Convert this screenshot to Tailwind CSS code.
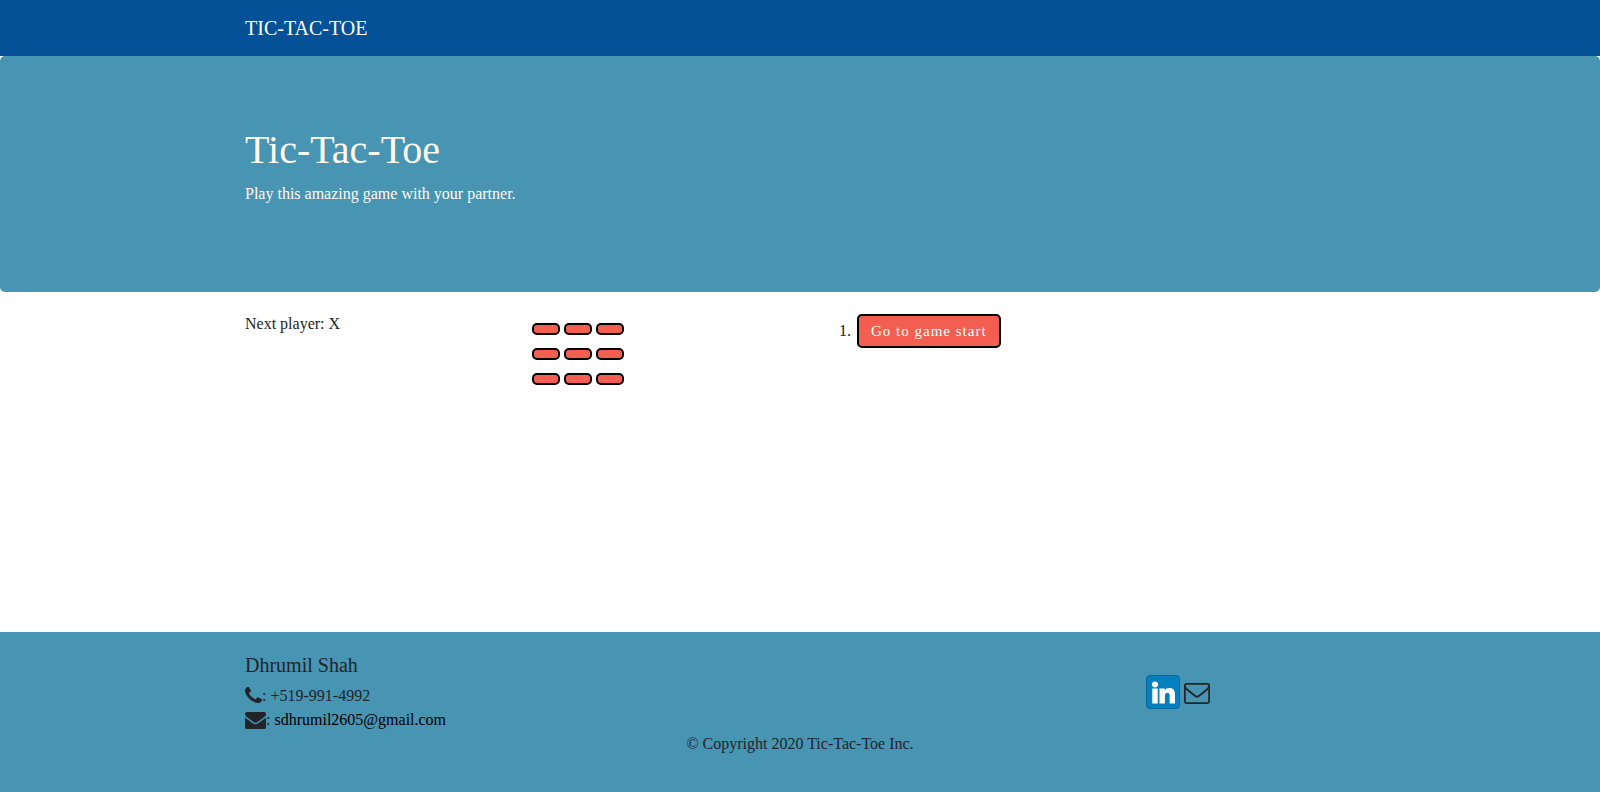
<!DOCTYPE html>
<html lang="en">
<head>
<meta charset="utf-8">
<meta name="viewport" content="width=device-width, initial-scale=1">
<title>Tic-Tac-Toe</title>
<script src="https://cdn.jsdelivr.net/npm/@tailwindcss/browser@4"></script>
</head>
<body class="flex min-h-screen flex-col bg-white font-['Liberation_Serif','Times_New_Roman',serif] text-base text-[#212529]">
<nav class="bg-[#055197] py-[13px]">
  <div class="mx-auto max-w-[1140px] px-[15px]">
    <a href="#" class="block text-xl leading-[30px] text-white">TIC-TAC-TOE</a>
  </div>
</nav>
<header class="mb-5 rounded-[5px] bg-[#4794b3] pt-[70px] pb-[86px] text-[#fffaf0]">
  <div class="mx-auto max-w-[1140px] px-[15px]">
    <h1 class="mb-2 text-[40px] leading-[48px]">Tic-Tac-Toe</h1>
    <p class="leading-6">Play this amazing game with your partner.</p>
  </div>
</header>
<main class="mx-auto grid w-full max-w-[1140px] grow grid-cols-4">
  <div class="px-[15px]">Next player: X</div>
  <div class="px-[17px] pt-[11px]">
    <div class="grid w-fit grid-cols-3 gap-x-1 gap-y-[13px]">
      <button type="button" aria-label="Square 1" class="h-3 w-7 rounded-[5px] border-2 border-black bg-[#f25f50]"></button>
      <button type="button" aria-label="Square 2" class="h-3 w-7 rounded-[5px] border-2 border-black bg-[#f25f50]"></button>
      <button type="button" aria-label="Square 3" class="h-3 w-7 rounded-[5px] border-2 border-black bg-[#f25f50]"></button>
      <button type="button" aria-label="Square 4" class="h-3 w-7 rounded-[5px] border-2 border-black bg-[#f25f50]"></button>
      <button type="button" aria-label="Square 5" class="h-3 w-7 rounded-[5px] border-2 border-black bg-[#f25f50]"></button>
      <button type="button" aria-label="Square 6" class="h-3 w-7 rounded-[5px] border-2 border-black bg-[#f25f50]"></button>
      <button type="button" aria-label="Square 7" class="h-3 w-7 rounded-[5px] border-2 border-black bg-[#f25f50]"></button>
      <button type="button" aria-label="Square 8" class="h-3 w-7 rounded-[5px] border-2 border-black bg-[#f25f50]"></button>
      <button type="button" aria-label="Square 9" class="h-3 w-7 rounded-[5px] border-2 border-black bg-[#f25f50]"></button>
    </div>
  </div>
  <div class="px-[15px]">
    <ol class="list-decimal pl-10">
      <li><button type="button" class="m-[2px] rounded-[5px] border-2 border-black bg-[#f25f50] px-3 py-[5px] text-[15px] leading-5 tracking-[1px] whitespace-nowrap text-white">Go to game start</button></li>
    </ol>
  </div>
</main>
<footer class="bg-[#4794b3] pt-5 pb-9">
  <div class="mx-auto max-w-[1140px] px-[15px]">
    <div class="flex items-start justify-between">
      <address class="not-italic">
        <h2 class="mb-1.5 text-xl leading-[26px]">Dhrumil Shah</h2>
        <div class="flex h-6 items-start"><svg class="mt-[3px] h-4 w-[17px]" viewBox="0 0 1408 1408" preserveAspectRatio="none" fill="currentColor" aria-hidden="true"><path d="M1408 1112q0 27-10 70.500t-21 68.500q-21 50-122 106-94 51-186 51-27 0-53-3.500t-57.500-12.500-47-14.500-55.500-20.500-49-18q-98-35-175-83-127-79-264-216t-216-264q-48-77-83-175-3-9-18-49t-20.500-55.500-14.500-47-12.500-57.500-3.500-53q0-92 51-186 56-101 106-122 25-11 68.500-21t70.500-10q14 0 21 3 18 6 53 76 11 19 30 54t35 63.500 31 53.500q3 4 17.500 25t21.500 35.500 7 28.500q0 20-28.500 50t-62 55-62 53-28.500 46q0 9 5 22.500t8.500 20.500 14 24 11.500 19q76 137 174 235t235 174q2 1 19 11.500t24 14 20.500 8.500 22.500 5q18 0 46-28.500t53-62 55-62 50-28.500q14 0 28.500 7t35.500 21.500 25 17.500q25 15 53.500 31t63.500 35 54 30q70 35 76 53 3 7 3 21z"/></svg><span>: +519-991-4992</span></div>
        <div class="flex h-6 items-start"><svg class="mt-1 h-[17px] w-[21px]" viewBox="0 0 1792 1408" preserveAspectRatio="none" fill="currentColor" aria-hidden="true"><path d="M1792 454v794q0 66-47 113t-113 47H160q-66 0-113-47T0 1248V454q44 49 101 87 362 246 497 345 57 42 92.500 65.500t94.500 48 110 24.500h2q51 0 110-24.500t94.500-48T1194 886q170-123 498-345 57-39 100-87zm0-294q0 79-49 151t-122 123q-376 261-468 325-10 7-42.500 30.500t-54 38-52 32.500-57.500 27-50 9h-2q-23 0-50-9t-57.500-27-52-32.500-54-38T639 759q-91-64-262-182.500T172 434q-62-42-117-115.500T0 182q0-78 41.500-130T160 0h1472q65 0 112.500 47T1792 160z"/></svg><span class="whitespace-pre">: </span><a href="mailto:sdhrumil2605@gmail.com" class="text-black">sdhrumil2605@gmail.com</a></div>
      </address>
      <div class="mt-[23px] mr-[145px] flex items-end gap-1">
        <a href="#" aria-label="LinkedIn"><svg class="block h-[34px] w-[34px]" viewBox="0 0 34 34" aria-hidden="true"><rect x=".5" y=".5" width="33" height="33" rx="3.500" fill="#0380bd" stroke="#06659a"/><g fill="#fff"><circle cx="9" cy="9.500" r="3"/><path d="M6.300 13.500h5.400V28.500H6.300zM13.500 13.500h5.200v1.900c1-1.500 2.600-2.300 4.700-2.300 4 0 5.600 2.600 5.600 6.600v8.800h-5.300v-7.600c0-1.900-.4-3.200-2.200-3.200-1.900 0-2.600 1.300-2.600 3.200v7.600h-5.400z"/></g></svg></a>
        <a href="mailto:sdhrumil2605@gmail.com" aria-label="Email" class="pb-[5px]"><svg class="block h-[21px] w-[26px]" viewBox="0 0 26 21" fill="none" stroke="currentColor" stroke-width="1.700" stroke-linejoin="round" aria-hidden="true"><rect x=".9" y=".9" width="24.200" height="19.200" rx="1.500"/><path d="M1 2.500c0 1.800 1 3.200 2.600 4.500l6.900 5.500c1 .8 1.700 1.300 2.500 1.300s1.500-.5 2.500-1.300L22.400 7c1.600-1.300 2.600-2.700 2.600-4.500"/></svg></a>
      </div>
    </div>
    <p class="text-center leading-6">© Copyright 2020 Tic-Tac-Toe Inc.</p>
  </div>
</footer>
</body>
</html>
